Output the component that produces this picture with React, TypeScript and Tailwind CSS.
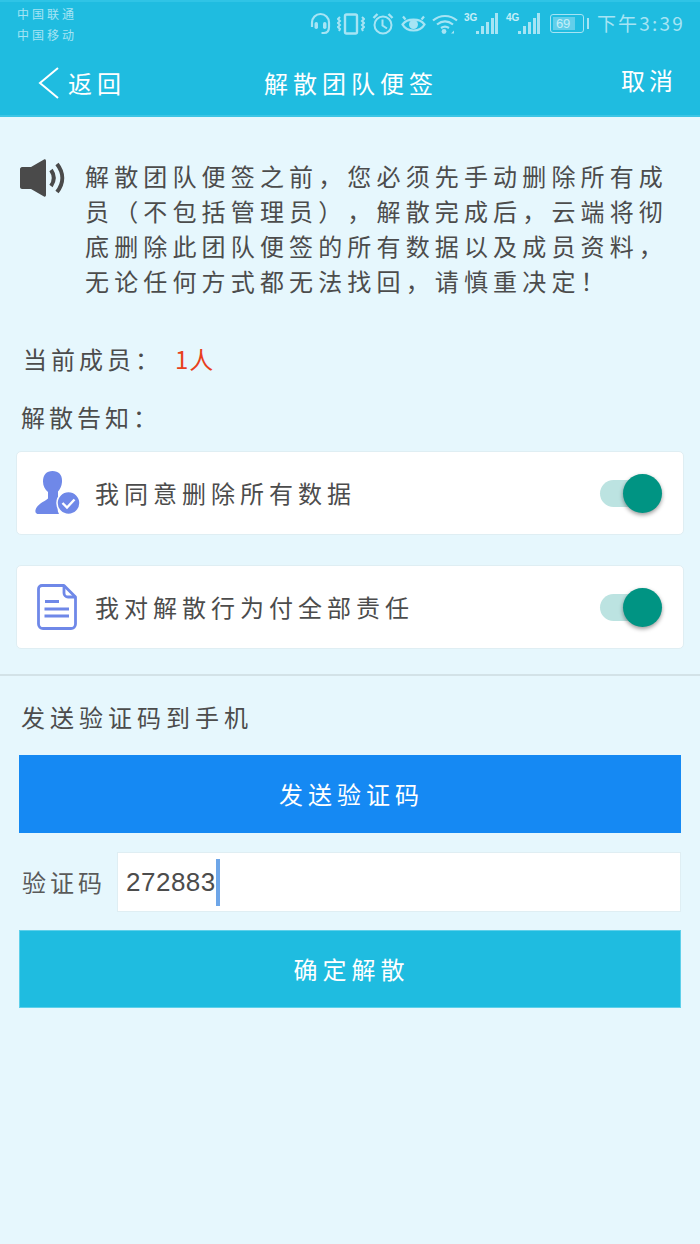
import React from "react";

const cjk = { fontFamily: '"Noto Sans CJK SC", sans-serif' };

const Headset = () => (
  <svg width="21" height="23" viewBox="0 0 21 23" fill="none" stroke="#a6e4f4" strokeWidth="2.200">
    <path d="M2 15V10.500a8.500 8.500 0 0 1 17 0V15" />
    <rect x="4.500" y="10" width="3.500" height="7" rx="1.700" fill="#a6e4f4" stroke="none" />
    <rect x="13" y="10" width="3.500" height="7" rx="1.700" fill="#a6e4f4" stroke="none" />
    <path d="M19 15c0 4-2 6-5 6h-2.500" />
  </svg>
);

const Vibrate = () => (
  <svg width="28" height="22" viewBox="0 0 28 22" fill="none" stroke="#a6e4f4" strokeWidth="2">
    <rect x="8" y="1.500" width="12" height="19" rx="1.500" strokeWidth="2.400" />
    <path d="M3 4l-2 2 2 2-2 2 2 2-2 2 2 2-1 2" />
    <path d="M25 4l2 2-2 2 2 2-2 2 2 2-2 2 1 2" />
  </svg>
);

const Alarm = () => (
  <svg width="22" height="23" viewBox="0 0 22 23" fill="none" stroke="#a6e4f4" strokeWidth="2">
    <circle cx="11" cy="13" r="8.500" />
    <path d="M10.500 7.500V13.500L15 16.500" />
    <path d="M1.500 6L5.500 2M20.500 6L16.500 2" strokeWidth="2.400" />
  </svg>
);

const Eye = () => (
  <svg width="25" height="20" viewBox="0 0 25 20" fill="none" stroke="#a6e4f4" strokeWidth="2.200">
    <path d="M1.500 10.500C6 4 19 4 23.500 10.500 19 18.500 6 18.500 1.500 10.500Z" />
    <circle cx="12.500" cy="10.500" r="4.500" fill="#a6e4f4" stroke="none" />
    <path d="M2 2.500L4.500 5.500M23 2.500L20.500 5.500" />
  </svg>
);

const Wifi = () => (
  <svg width="26" height="20" viewBox="0 0 26 20" fill="none" stroke="#a6e4f4" strokeWidth="2.200">
    <path d="M1 6.500C8 .5 18 .5 25 6.500" />
    <path d="M5 10.500c5-4 11-4 16 0" />
    <path d="M9 14c3-2 5-2 8 0" />
    <circle cx="12" cy="17.500" r="2.400" fill="#a6e4f4" stroke="none" />
    <path d="M19 19.500l3-3v3z" fill="#a6e4f4" stroke="none" />
  </svg>
);

const Signal = ({ label }: { label: string }) => (
  <div className="relative h-[21px] w-[34px]">
    <span className="absolute left-0 top-[-1px] text-[10px] leading-[12px] font-bold text-[#c5eef8]" style={{ fontFamily: '"Liberation Sans Narrow", "Liberation Sans", sans-serif' }}>
      {label}
    </span>
    <svg className="absolute left-0 top-0" width="34" height="21" viewBox="0 0 34 21" fill="#a6e4f4">
      <rect x="12" y="18" width="3" height="3" />
      <rect x="17" y="13" width="3" height="8" />
      <rect x="22" y="9" width="3" height="12" />
      <rect x="27" y="5" width="3" height="16" />
      <rect x="31" y="0" width="3" height="21" />
    </svg>
  </div>
);

const Battery = () => (
  <div className="flex items-center gap-[3px]">
    <div className="flex h-[19px] w-[34px] items-center rounded-[3px] border border-[#a6e4f4] p-[2px]">
      <div className="flex h-full w-[22px] items-center bg-[#62cfea] text-[13px] leading-none text-[#c5eef8]" style={{ fontFamily: '"Liberation Sans", sans-serif' }}>
        <span className="ml-[3px]">69</span>
      </div>
    </div>
    <div className="h-[11px] w-[2px] bg-[#a6e4f4]" />
  </div>
);

const Toggle = () => (
  <div className="relative h-[27px] w-[50px] rounded-full bg-[#bce3e1]">
    <div className="absolute left-[23px] top-[-6px] h-[39px] w-[39px] rounded-full bg-[#009483] shadow-[0_2px_4px_rgba(0,0,0,0.4)]" />
  </div>
);

const UserCheck = () => (
  <svg width="46" height="46" viewBox="0 0 46 46">
    <path d="M17.500 1c6.500 0 10 4 9.500 11-.3 4-2 7.500-4 9.500v5.500c1.500 1.500 3 2.500 6 3.500-6 3-8 8-5 13.500H4c-3 0-4-1.500-3.500-4C2 34 9 32 13 28.500V22c-3-2.500-5-6-5-10.500C8 5 11.500 1 17.500 1Z" fill="#6f88e8" />
    <circle cx="33.500" cy="33" r="11.500" fill="#6f88e8" stroke="#ffffff" strokeWidth="1.500" />
    <path d="M27.500 33l4.500 4.500 7.500-8" fill="none" stroke="#ffffff" strokeWidth="2.400" />
  </svg>
);

const DocIcon = () => (
  <svg width="40" height="46" viewBox="0 0 40 46" fill="none" stroke="#6f88e8" strokeWidth="2.800">
    <path d="M5 1.500H27L38.500 13V40a4.500 4.500 0 0 1-4.500 4.500H6A4.500 4.500 0 0 1 1.500 40V5A3.500 3.500 0 0 1 5 1.500Z" strokeLinejoin="round" />
    <path d="M27 1.500V9a4 4 0 0 0 4 4H38.500" />
    <path d="M8 17.500H22M7.500 25H32M7.500 32H32" />
  </svg>
);

const Speaker = () => (
  <svg width="46" height="40" viewBox="0 0 46 40">
    <path d="M2 9H11L24 1.500C25 1 26 1.500 26 3V37C26 38.500 25 39 24 38.500L11 31H2C1 31 0 30 0 29V11C0 10 1 9 2 9Z" fill="#4a4a4a" />
    <path d="M31 12c3.500 5 3.500 11 0 16M37 6c7 9 7 19 0 28" fill="none" stroke="#4a4a4a" strokeWidth="4" />
  </svg>
);

const App = () => {
  return (
    <div className="flex h-[1244px] w-[700px] flex-col overflow-hidden bg-[#e6f7fd] text-[#4c4c4c] [text-spacing-trim:space-all]" style={cjk}>
      {/* header */}
      <div className="h-[117px] border-t-2 border-b-2 border-t-[#2fc4e6] border-b-[#3cc5e5] bg-[#1fbce0] text-white">
        <div className="flex h-[48px] items-center justify-between pb-[5px] pl-[17px] pr-[15px]">
          <div className="text-[12px] leading-[21px] tracking-[3px] text-[#a6e4f4]">
            <div>中国联通</div>
            <div>中国移动</div>
          </div>
          <div className="flex items-center">
            <Headset />
            <div className="ml-[6px]"><Vibrate /></div>
            <div className="ml-[7px]"><Alarm /></div>
            <div className="ml-[7px]"><Eye /></div>
            <div className="ml-[6px]"><Wifi /></div>
            <div className="ml-[6px]"><Signal label="3G" /></div>
            <div className="ml-[8px]"><Signal label="4G" /></div>
            <div className="ml-[10px]"><Battery /></div>
            <span className="ml-[8px] text-[19px] tracking-[2.200px] text-[#a6e4f4]">下午3:39</span>
          </div>
        </div>
        <div className="flex h-[65px] items-center justify-between pl-[38px] pr-[23px]">
          <div className="flex w-[150px] items-center">
            <svg width="21" height="32" viewBox="0 0 21 32" fill="none" stroke="#ffffff" strokeWidth="2">
              <path d="M20 1L2 16L20 31" />
            </svg>
            <span className="ml-[9px] text-[24px] tracking-[5px]">返回</span>
          </div>
          <span className="text-[24px] tracking-[5px]">解散团队便签</span>
          <span className="mb-[6px] w-[163px] text-right text-[24px] tracking-[4px]">取消</span>
        </div>
      </div>

      {/* notice */}
      <div className="flex pt-[41px] pl-[20px] pr-[30px]">
        <div className="w-[65px] shrink-0"><Speaker /></div>
        <p className="text-[24px] leading-[35px] tracking-[5.150px]">
          解散团队便签之前，您必须先手动删除所有成员（不包括管理员），解散完成后，云端将彻底删除此团队便签的所有数据以及成员资料，无论任何方式都无法找回，请慎重决定！
        </p>
      </div>

      <div className="mt-[43px] flex h-[35px] items-center pl-[23px] text-[24px] tracking-[4px]">
        <span>当前成员：</span>
        <span className="ml-[12px] tracking-[1px] text-[#e8401c]">1人</span>
      </div>
      <div className="mt-[23px] h-[35px] pl-[21px] text-[24px] leading-[35px] tracking-[4px]">解散告知：</div>

      {/* agreements */}
      <div className="mt-[17px] mx-[16px] flex h-[84px] items-center justify-between rounded-[5px] border border-[#dfeef3] bg-white pl-[18px] pr-[33px]">
        <div className="flex items-center">
          <UserCheck />
          <span className="ml-[14px] text-[24px] tracking-[5px]">我同意删除所有数据</span>
        </div>
        <Toggle />
      </div>
      <div className="mt-[30px] mx-[16px] flex h-[84px] items-center justify-between rounded-[5px] border border-[#dfeef3] bg-white pl-[20px] pr-[33px]">
        <div className="flex items-center">
          <DocIcon />
          <span className="ml-[18px] text-[24px] tracking-[5px]">我对解散行为付全部责任</span>
        </div>
        <Toggle />
      </div>

      <div className="mt-[25px] h-[2px] bg-[#d3e2e7]" />

      <div className="mt-[23px] h-[35px] pl-[21px] text-[24px] leading-[35px] tracking-[5px]">发送验证码到手机</div>

      <div className="mt-[21px] mx-[19px] flex h-[78px] items-center justify-center bg-[#1589f3] pl-[3px] text-[24px] tracking-[5px] text-white">发送验证码</div>

      <div className="mt-[19px] ml-[22px] mr-[19px] flex h-[60px] items-center">
        <span className="w-[95px] shrink-0 text-[24px] tracking-[4px] text-[#5a5a5a]">验证码</span>
        <div className="flex h-full flex-1 items-center border border-[#dfeef3] bg-white pl-[8px] text-[26px] tracking-[0.500px]" style={{ fontFamily: '"Liberation Sans", sans-serif' }}>
          <span>272883</span>
          <div className="h-[47px] w-[4px] bg-[#6ea6e8]" />
        </div>
      </div>

      <div className="mt-[18px] mx-[19px] flex h-[78px] items-center justify-center border border-[#5ed0ea] bg-[#1fbce0] pl-[3px] text-[24px] tracking-[5px] text-white">确定解散</div>
    </div>
  );
};

export default App;
